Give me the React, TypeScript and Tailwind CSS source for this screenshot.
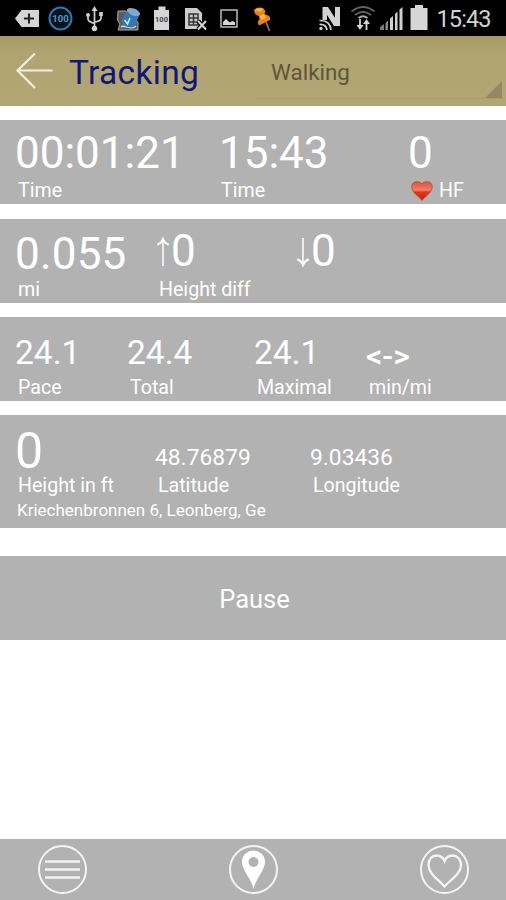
import type { ReactNode } from 'react';
import clsx from 'clsx';

type MetricProps = {
  value: ReactNode;
  label?: ReactNode;
  className?: string;
  valueClass?: string;
};

const Metric = ({ value, label, className, valueClass }: MetricProps) => (
  <div className={clsx('flex flex-col justify-end shrink-0 whitespace-nowrap', className)}>
    <div className={clsx('flex items-center', valueClass)}>{value}</div>
    <div className="flex items-center h-5 pl-[3px] text-[19.6px] leading-5">{label}</div>
  </div>
);

const Arrow = ({ down = false }: { down?: boolean }) => (
  <svg width="14" height="30" viewBox="0 0 14 30" fill="none" stroke="white" className={clsx('mr-px', down && 'rotate-180')}>
    <path d="M7 2V29" strokeWidth="1.5" />
    <path d="M1.3 7.8C4 6.8 6 4.8 7 2C8 4.8 10 6.8 12.7 7.8" strokeWidth="2" />
  </svg>
);

const Heart = () => (
  <svg width="22" height="20" viewBox="0 0 22 20" className="mr-[6px]">
    <defs>
      <linearGradient id="heart" x1="0" y1="0" x2="0" y2="1">
        <stop offset="0" stopColor="#e0503c" />
        <stop offset="0.45" stopColor="#ee7f6a" />
        <stop offset="0.55" stopColor="#e2371c" />
        <stop offset="1" stopColor="#c41e0a" />
      </linearGradient>
    </defs>
    <path d="M11 19.500C9 16 0.700 12 0.700 5.800C0.700 2.700 2.900 0.700 5.700 0.700C8.200 0.700 10.400 1.500 11 3.200C11.600 1.500 13.800 0.700 16.300 0.700C19.100 0.700 21.300 2.700 21.300 5.800C21.300 12 13 16 11 19.500Z" fill="url(#heart)" stroke="#b9402f" strokeWidth="0.7" />
  </svg>
);

const StatusBar = () => (
  <div className="h-9 bg-black">
    <svg width="506" height="36" viewBox="0 0 506 36" fontFamily="Roboto, sans-serif">
      {/* Notifications */}
      <path d="M15 18.500L21.500 10H39V27H21.500Z" fill="#d6d6d6" />
      <path d="M29 13.500V23.500M24 18.500H34" stroke="#222" strokeWidth="2" />
      <circle cx="60.500" cy="18.500" r="11" fill="#07131c" stroke="#2c79b0" strokeWidth="2" />
      <text x="60.500" y="22" textAnchor="middle" fontSize="9.500" fontWeight="700" fill="#5695c4">100</text>

      <g stroke="#d0d0d0" strokeWidth="1.700" fill="none">
        <path d="M94.500 9V28M88 15V19Q88 21.500 94.500 23.500M101 14V18.500Q101 21 94.500 22" />
      </g>
      <path d="M94.500 6L97.500 11H91.500Z" fill="#d0d0d0" />
      <circle cx="88" cy="15" r="2" fill="#d0d0d0" />
      <rect x="99.200" y="12" width="3.600" height="4" fill="#d0d0d0" />
      <circle cx="94.500" cy="28.500" r="2.700" fill="#d0d0d0" />

      <path d="M118 11H126L134 19L138 22V30H118L120 24L117.500 20Z" fill="#5c5c5c" stroke="#aaa" />
      <path d="M121 27C125 24 131 31 136 26" stroke="#ddd" strokeWidth="1.500" fill="none" />
      <path d="M127 10L140 14L134 27Q126 29 121 22Z" fill="#2f78b5" />
      <ellipse cx="133.500" cy="12" rx="7" ry="3.400" fill="#83a9c6" transform="rotate(22 133.500 12)" />
      <path d="M124.500 20L127.500 24L130 18" stroke="#d8edfa" strokeWidth="1.500" fill="none" />

      <path d="M158.500 6.500H165.500V10H169V30H154V10H158.500Z" fill="#d6d6d6" />
      <text x="161.500" y="22" textAnchor="middle" fontSize="7.500" fontWeight="700" fill="#444">100</text>

      <path d="M185 8H197L202 13V29H185Z" fill="#cdcdcd" />
      <path d="M189 14H198V25H189ZM189 18H198M193.500 14V25M189 22H198" fill="none" stroke="#333" strokeWidth="1.500" />
      <path d="M198 21L206 29.500M206 21L198 29.500" stroke="#000" strokeWidth="4.500" />
      <path d="M198 21L206 29.500M206 21L198 29.500" stroke="#d6d6d6" strokeWidth="2" />

      <rect x="221" y="10" width="16" height="17" fill="#080808" stroke="#bcbcbc" strokeWidth="1.500" />
      <path d="M223 25V22L226 19L228 21L230 22.500L232 21L235 22V25Z" fill="#d6d6d6" />

      <path d="M266 22L269.500 31" stroke="#986070" strokeWidth="1.800" />
      <path d="M254 10Q257 6.500 263 8L265.500 11L264.500 14L267 15Q271 16 270 20L259 25.500Q256.500 22 259.500 19.500L259 16Q254 15 254 10Z" fill="#e8821c" />
      <path d="M255 10Q258 7 263 9L260 12ZM260 16L264 14L266 18L261 20Z" fill="#f8b544" />

      {/* Connection */}
      <path d="M322.500 20V7H328L335 18V7H340V26H334L327 15V20Z" fill="#d2d2d2" />
      <path d="M319.500 20.500Q330 20 331 30M319.500 24.500Q326 24 327 30" stroke="#d2d2d2" strokeWidth="1.700" fill="none" />
      <circle cx="321" cy="28.500" r="1.700" fill="#d2d2d2" />

      <g fill="none" stroke="#606060" strokeWidth="2">
        <path d="M351.500 11.500Q363 2.500 374.500 11.500" />
        <path d="M355 15Q363 8.500 371 15" />
        <path d="M358.500 18Q363 14.500 367.500 18" stroke="#aaa" />
      </g>
      <path d="M360 19V27M366.500 30V22" stroke="#d2d2d2" strokeWidth="1.800" />
      <path d="M356.500 25H363.500L360 30ZM363 24H370L366.500 19Z" fill="#d2d2d2" />

      <path d="M380 30V27L384 24V30Z" fill="#777" />
      <path d="M385.500 30V23L388 20.500V30Z" fill="#888" />
      <path d="M390 30V18.500L393 16V30ZM395 30V14L397.500 11.500V30ZM399.500 30V9.500L402.500 7V30Z" fill="#cfcfcf" />
      <path d="M415 5H423V8H427.500V30H410.500V8H415Z" fill="#d6d6d6" />
      <text x="436.500" y="26.800" fontSize="23.500" textLength="55" fill="#d2d2d2">15:43</text>
    </svg>
  </div>
);

const Header = () => (
  <div className="flex h-[70px] bg-linear-to-b from-[#a69a69] via-[#b0a472] via-25% to-[#b2a774]">
    <svg width="68" height="70" viewBox="0 0 68 70" fill="none" stroke="#f7eddb" strokeWidth="2.200">
      <path d="M35 17.500L17.500 34.500L35 52M17.500 34.500H52.500" />
    </svg>
    <h1 className="w-[189px] pl-px text-[33.5px] leading-[73px] tracking-[0.3px] text-[#101775]">Tracking</h1>
    <div className="flex w-[245px] h-[63px] pl-[14px] border-b border-[#a99e6d] justify-between">
      <span className="text-[22.4px] leading-[72px] text-[#5e5637]">Walking</span>
      <svg width="17" height="17" viewBox="0 0 17 17" className="self-end">
        <path d="M17 0V17H0Z" fill="#948a62" />
      </svg>
    </div>
  </div>
);

const BottomBar = () => (
  <div className="flex justify-between h-[61px] px-[37px] pt-[6px] mt-auto bg-[#b2b2b2]">
    <svg width="50" height="50" viewBox="0 0 50 50" fill="none" stroke="#f4f4f4" strokeWidth="2">
      <circle cx="25.500" cy="24.500" r="23.500" />
      <path d="M8 16.500H43M8 24.500H43M8 32.500H43" strokeWidth="2.400" />
    </svg>
    <svg width="50" height="50" viewBox="0 0 50 50">
      <circle cx="25.500" cy="24.500" r="23.500" fill="none" stroke="#f4f4f4" strokeWidth="2" />
      <path fillRule="evenodd" d="M25.500 44C24 35 14 25 14 17A11.500 11.500 0 0 1 37 17C37 25 27 35 25.500 44ZM25.500 12A5 5 0 1 0 25.500 22A5 5 0 1 0 25.500 12Z" fill="white" />
    </svg>
    <svg width="50" height="50" viewBox="0 0 50 50" fill="none" stroke="#f4f4f4" strokeWidth="2">
      <circle cx="25.500" cy="24.500" r="23.500" />
      <path d="M25.500 41.500C20 35 9.500 29 9.500 20C9.500 14 13 10.500 17.500 10.500C21.500 10.500 24 12.500 25.500 16C27 12.500 29.500 10.500 33.500 10.500C38 10.500 42 14 42 20C42 29 31 35 25.500 41.500Z" strokeWidth="2.300" />
    </svg>
  </div>
);

export default function App() {
  return (
    <div className="flex flex-col w-[506px] h-[900px] overflow-hidden bg-white text-white font-['Roboto',sans-serif]">
      <StatusBar />
      <Header />

      {/* Duration, clock, heart rate */}
      <section className="flex h-[84px] mt-[14px] pl-[15px] pb-[3px] bg-[#b2b2b2]">
        <Metric value="00:01:21" label="Time" className="w-[203px]" valueClass="text-[44px] leading-[56px]" />
        <Metric value="15:43" label="Time" className="w-[190px]" valueClass="pl-px text-[44px] leading-[56px]" />
        <Metric value="0" label={<><Heart />HF</>} valueClass="text-[44px] leading-[56px]" />
      </section>

      {/* Distance and climb */}
      <section className="flex h-[84px] mt-[15px] pl-[15px] pb-[3px] bg-[#b2b2b2]">
        <Metric value="0.055" label="mi" className="w-[141px]" valueClass="text-[44px] leading-[51px] tracking-[0.2px]" />
        <Metric value={<><Arrow />0</>} label="Height diff" className="w-[140px]" valueClass="text-[44px] leading-[57px]" />
        <Metric value={<><Arrow down />0</>} valueClass="text-[44px] leading-[57px]" />
      </section>

      {/* Pace */}
      <section className="flex h-[84px] mt-[14px] pl-[15px] pb-[3px] bg-[#b2b2b2]">
        <Metric value="24.1" label="Pace" className="w-[112px]" valueClass="text-[33.5px] leading-[50px]" />
        <Metric value="24.4" label="Total" className="w-[127px]" valueClass="text-[33.5px] leading-[50px]" />
        <Metric value="24.1" label="Maximal" className="w-[112px]" valueClass="text-[33.5px] leading-[50px]" />
        <Metric value="<->" label="min/mi" valueClass="text-[32px] leading-[44px] font-medium" />
      </section>

      {/* Position */}
      <section className="h-[113px] mt-[14px] pl-[15px] pt-[8px] bg-[#b2b2b2]">
        <div className="flex h-[73px]">
          <Metric value="0" label="Height in ft" className="w-[140px]" valueClass="text-[50px] leading-[50px]" />
          <Metric value="48.76879" label="Latitude" className="w-[155px]" valueClass="text-[22.8px] leading-[36px]" />
          <Metric value="9.03436" label="Longitude" valueClass="text-[22.8px] leading-[36px]" />
        </div>
        <p className="pl-[2px] text-[17px] leading-7">Kriechenbronnen 6, Leonberg, Ge</p>
      </section>

      <button type="button" className="h-[84px] mt-7 pl-[3px] pt-[3px] bg-[#b2b2b2] text-[25.5px]">Pause</button>

      <BottomBar />
    </div>
  );
}
